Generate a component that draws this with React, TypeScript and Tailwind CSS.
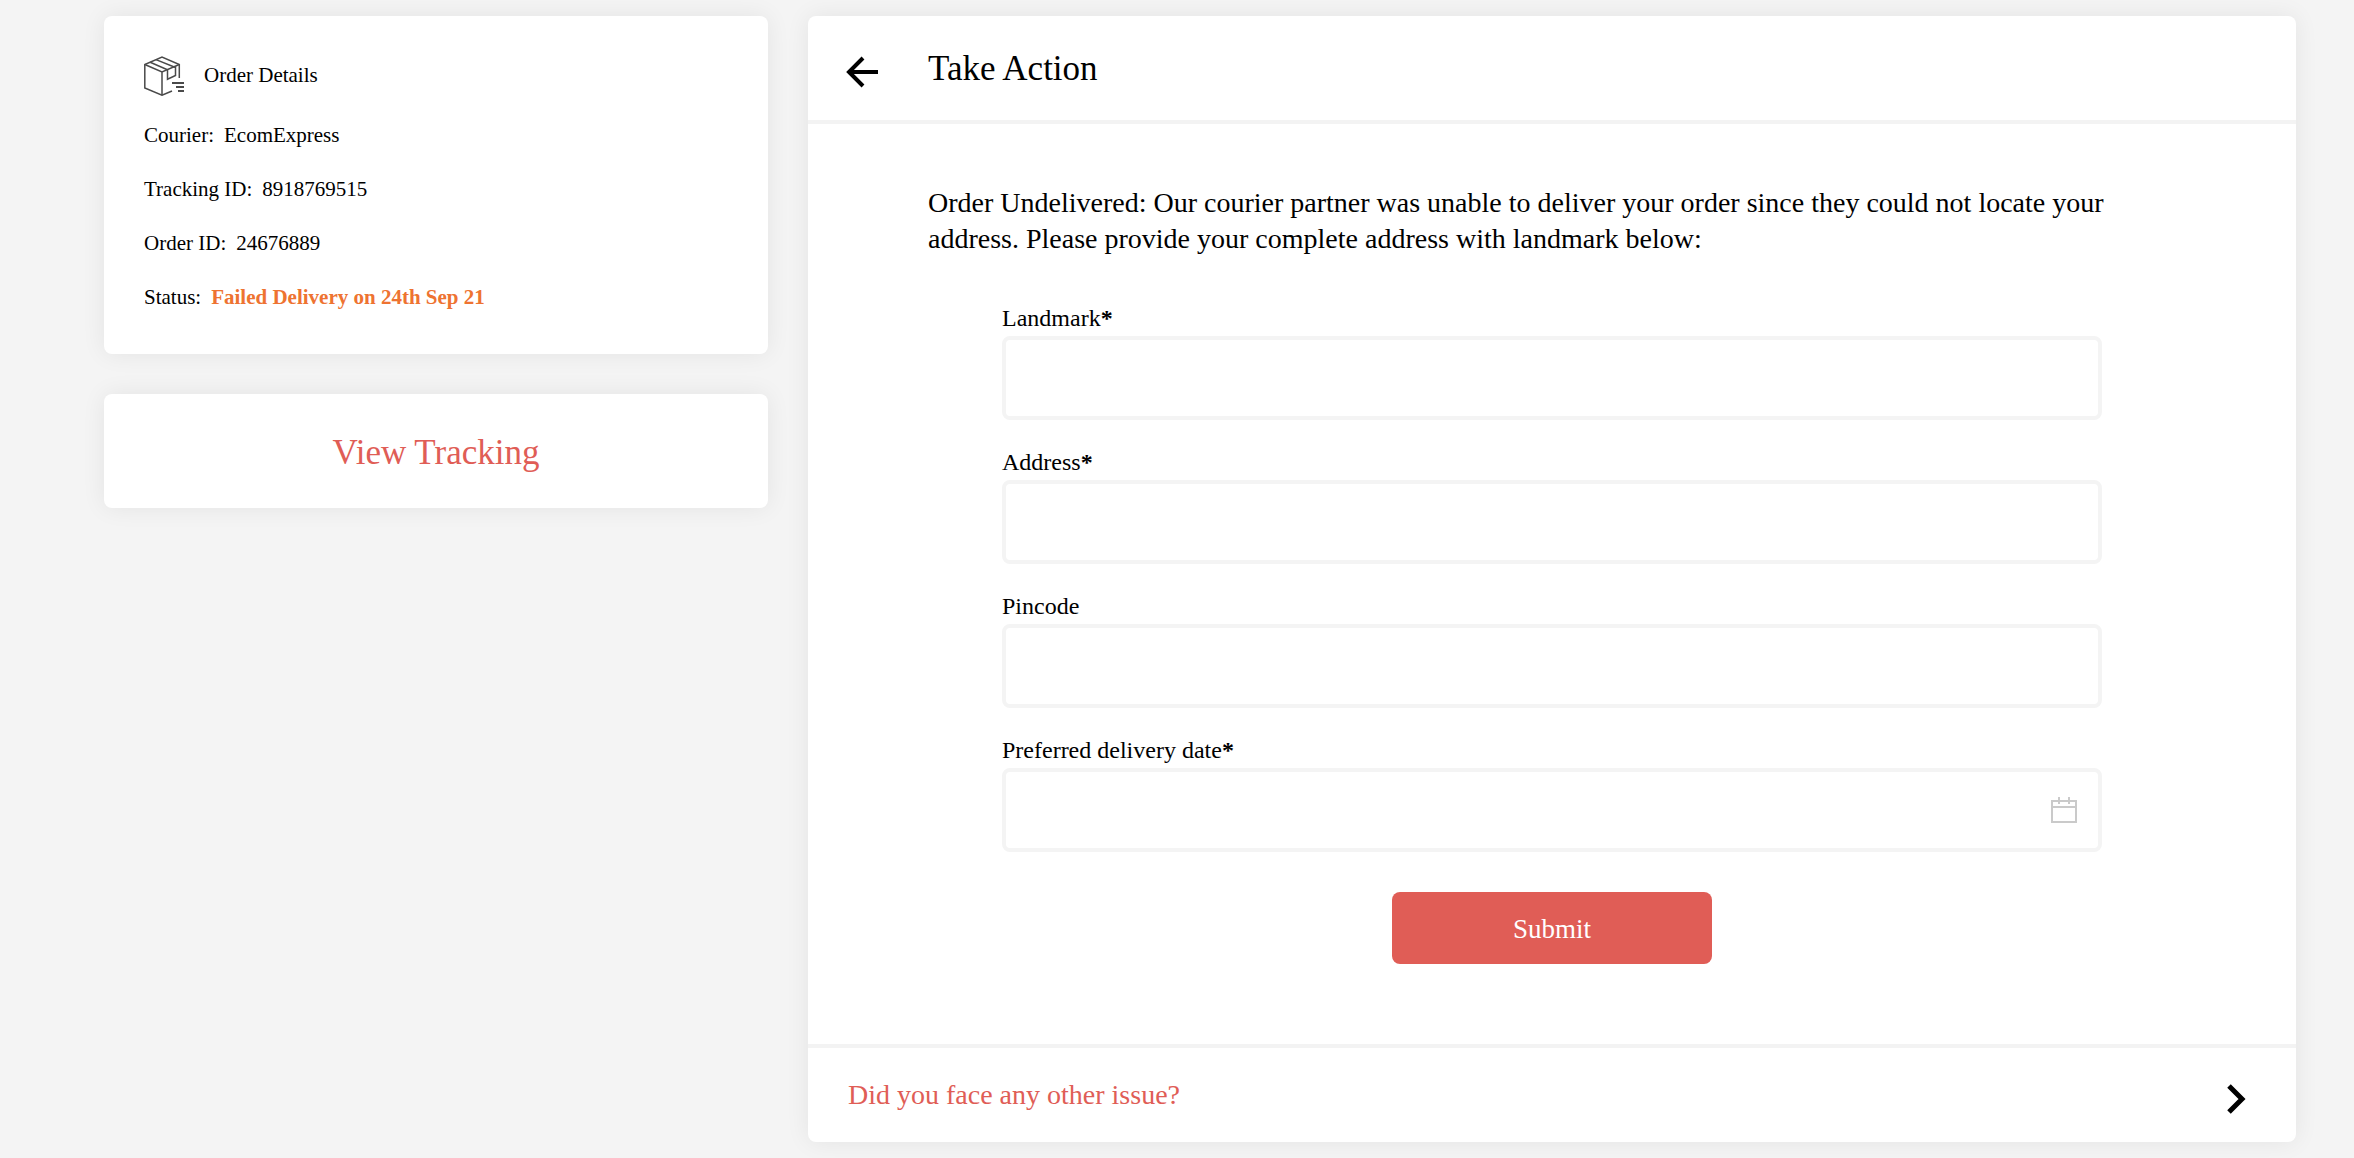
import React from 'react';

interface FieldProps {
  id: string;
  label: string;
  required?: boolean;
  icon?: React.ReactNode;
}

const details = [
  { label: 'Courier', value: 'EcomExpress' },
  { label: 'Tracking ID', value: '8918769515' },
  { label: 'Order ID', value: '24676889' },
  { label: 'Status', value: 'Failed Delivery on 24th Sep 21', failed: true },
];

const PackageIcon = () => (
  <svg className="w-10 h-10 shrink-0" viewBox="0 0 40 40" fill="none" stroke="#4a4a4a" strokeWidth="1.5" aria-hidden="true">
    <path d="M35.3 22V8.5L18 1L0.8 8.5V32L18 39.2L28 35" />
    <path d="M0.8 8.5L18 16L35.3 8.5M18 16V39.2" />
    <path d="M12 3.6L31.5 11.5M6.2 6.2L23.5 13.8V23.3L31.5 19.5V10.4" />
    <path d="M28 27H40M32 31H40M34 35H40" strokeWidth="2" />
  </svg>
);

const ArrowLeftIcon = () => (
  <svg className="w-8 h-8" viewBox="0 0 32 32" fill="none" stroke="#000" strokeWidth="4" aria-hidden="true">
    <path d="M32 16H4M17 2L3 16L17 30" />
  </svg>
);

const ChevronRightIcon = () => (
  <svg className="w-5 h-8" viewBox="0 0 20 32" fill="none" stroke="#000" strokeWidth="5" aria-hidden="true">
    <path d="M3 3L16 16L3 29" />
  </svg>
);

const CalendarIcon = () => (
  <svg className="w-7 h-7" viewBox="0 0 28 28" fill="none" stroke="#cacaca" strokeWidth="2" aria-hidden="true">
    <path d="M2 5H26V26H2ZM2 11H26M9 1V8M19 1V8" />
  </svg>
);

const Field: React.FC<FieldProps> = ({ id, label, required, icon }) => (
  <div>
    <label htmlFor={id} className="block mb-1 text-[24px] leading-[28px]">
      {label}{required && <span className="font-bold">*</span>}
    </label>
    <div className="relative">
      <input
        id={id}
        type="text"
        required={required}
        className="block w-full h-[84px] px-6 text-[24px] bg-white border-4 border-[#f4f4f4] rounded-lg outline-none focus:border-[#e05d56]"
      />
      {icon && (
        <button type="button" aria-label="Choose date" className="absolute right-6 top-7">
          {icon}
        </button>
      )}
    </div>
  </div>
);

export default function App() {
  return (
    <div className="min-h-screen bg-[#f4f4f4] pl-[104px] pr-[58px] py-4 text-black font-['Liberation_Serif',serif]">
      <div className="grid grid-cols-[664fr_1488fr] items-start gap-10">
        <aside className="flex flex-col gap-10">
          <section className="bg-white rounded-lg shadow-[0_0_24px_rgba(0,0,0,0.07)] px-10 pt-10 pb-[45px] text-[21px] leading-[24px]">
            <div className="flex items-center gap-5">
              <PackageIcon />
              <h2 className="pb-0.5">Order Details</h2>
            </div>
            <dl className="mt-[27px] flex flex-col gap-[30px]">
              {details.map(({ label, value, failed }) => (
                <div key={label} className="flex gap-2.5">
                  <dt>{label}:</dt>
                  <dd className={failed ? 'font-bold text-[#ee7331]' : ''}>{value}</dd>
                </div>
              ))}
            </dl>
          </section>

          <button
            type="button"
            className="bg-white rounded-lg shadow-[0_0_24px_rgba(0,0,0,0.07)] pt-[39px] pb-[35px] text-[35px] leading-[40px] text-[#e05d56]"
          >
            View Tracking
          </button>
        </aside>

        <main className="bg-white rounded-lg shadow-[0_0_24px_rgba(0,0,0,0.07)]">
          <header className="flex items-center gap-[50px] h-[108px] pl-[38px] border-b-4 border-[#f3f3f3]">
            <button type="button" aria-label="Back" className="pt-2">
              <ArrowLeftIcon />
            </button>
            <h1 className="pt-0.5 text-[35px] leading-[40px]">Take Action</h1>
          </header>

          <div className="px-[120px] pt-[61px] pb-20">
            <p className="text-[28px] leading-[36px]">
              Order Undelivered: Our courier partner was unable to deliver your order since they could not locate your
              address. Please provide your complete address with landmark below:
            </p>

            <form className="mt-[47px] px-[74px] flex flex-col gap-7" onSubmit={(e) => e.preventDefault()}>
              <Field id="landmark" label="Landmark" required />
              <Field id="address" label="Address" required />
              <Field id="pincode" label="Pincode" />
              <Field id="delivery-date" label="Preferred delivery date" required icon={<CalendarIcon />} />
              <button
                type="submit"
                className="mt-3 w-80 h-[72px] pt-0.5 self-center rounded-lg bg-[#e05d56] text-[27px] leading-[36px] text-white"
              >
                Submit
              </button>
            </form>
          </div>

          <footer className="border-t-4 border-[#f3f3f3]">
            <a href="#other-issue" className="flex items-center justify-between h-[94px] pl-10 pr-[50px] text-[28px] leading-[36px] text-[#e05d56]">
              Did you face any other issue?
              <span className="pt-2">
                <ChevronRightIcon />
              </span>
            </a>
          </footer>
        </main>
      </div>
    </div>
  );
}
